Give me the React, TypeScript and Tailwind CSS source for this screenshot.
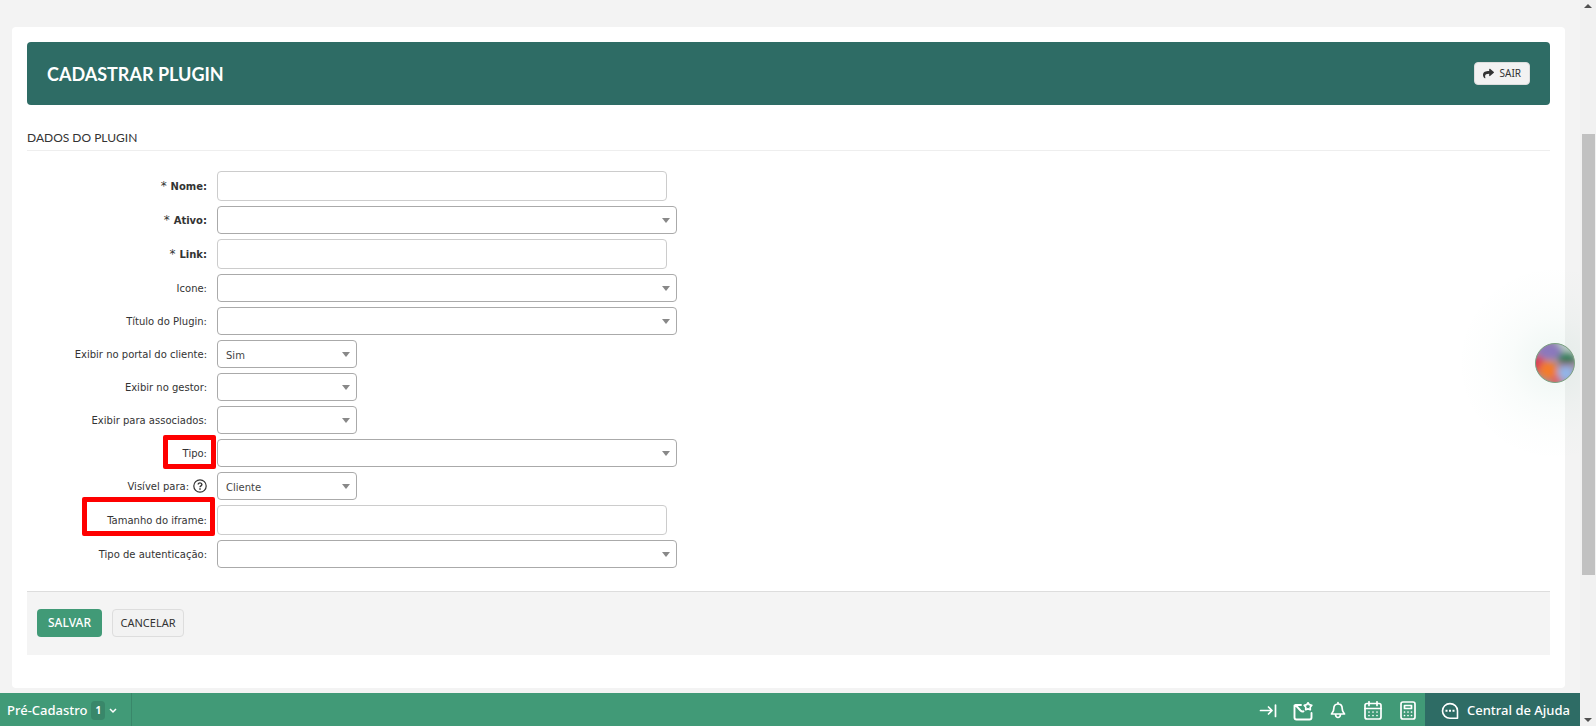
import type { ReactNode } from "react";
import { FaShare } from "react-icons/fa";
import clsx from "clsx";

type Field = {
  id: string;
  label: string;
  kind: "input" | "select" | "small";
  value?: string;
  required?: boolean;
  help?: boolean;
  mark?: "tipo" | "iframe";
};

const fields: Field[] = [
  { id: "nome", label: "Nome:", kind: "input", required: true },
  { id: "ativo", label: "Ativo:", kind: "select", required: true },
  { id: "link", label: "Link:", kind: "input", required: true },
  { id: "icone", label: "Icone:", kind: "select" },
  { id: "titulo", label: "Título do Plugin:", kind: "select" },
  { id: "portal", label: "Exibir no portal do cliente:", kind: "small", value: "Sim" },
  { id: "gestor", label: "Exibir no gestor:", kind: "small" },
  { id: "associados", label: "Exibir para associados:", kind: "small" },
  { id: "tipo", label: "Tipo:", kind: "select", mark: "tipo" },
  { id: "visivel", label: "Visível para:", kind: "small", value: "Cliente", help: true },
  { id: "iframe", label: "Tamanho do iframe:", kind: "input", mark: "iframe" },
  { id: "autenticacao", label: "Tipo de autenticação:", kind: "select" },
];

function HelpIcon() {
  return (
    <svg viewBox="0 0 14 14" className="ml-1 h-3.5 w-3.5 shrink-0" fill="none" stroke="#333" strokeWidth="1.2">
      <circle cx="7" cy="7" r="6.2" />
      <path d="M5.2 5.6c0-2.4 3.7-2.2 3.7 0 0 1.3-1.9 1.2-1.9 2.6" strokeWidth="1.4" />
      <path d="M7 9.3v1.4" strokeWidth="1.5" />
    </svg>
  );
}

function FieldRow({ field }: { field: Field }) {
  return (
    <div className="flex items-center">
      <div className="relative flex w-[180px] shrink-0 items-center justify-end">
        <label htmlFor={field.id} className={clsx("whitespace-nowrap", field.required && "font-bold")}>
          {field.required && <span className="text-xs leading-none font-normal">* </span>}
          {field.label}
        </label>
        {field.help && <HelpIcon />}
        {field.mark === "tipo" && (
          <div className="absolute -top-[11px] -right-[9px] h-[34px] w-[53px] rounded-xs border-5 border-[#fe0000]" />
        )}
        {field.mark === "iframe" && (
          <div className="absolute -top-4 -right-2 h-[39px] w-[133px] rounded-xs border-5 border-[#fe0000]" />
        )}
      </div>
      {field.kind === "input" ? (
        <input
          id={field.id}
          type="text"
          className="ml-2.5 h-[30px] w-[450px] rounded border border-[#ccc] bg-white px-2"
        />
      ) : (
        <div className={clsx("relative ml-2.5", field.kind === "small" ? "w-[140px]" : "w-[460px]")}>
          <select
            id={field.id}
            defaultValue={field.value ?? ""}
            className="block h-7 w-full appearance-none rounded border border-[#aaa] bg-white px-2 pt-0.5 text-[#444]"
          >
            <option>{field.value ?? ""}</option>
          </select>
          <svg viewBox="0 0 8 5" className="pointer-events-none absolute top-3 right-[7px] h-[5px] w-2" fill="#888">
            <path d="M0 0h8L4 5z" />
          </svg>
        </div>
      )}
    </div>
  );
}

function BarIcon({ children, label }: { children: ReactNode; label: string }) {
  return (
    <button type="button" aria-label={label} className="flex h-full w-[35px] items-center justify-center pt-0.5">
      <svg
        viewBox="0 0 20 20"
        className="h-5 w-5"
        fill="none"
        stroke="white"
        strokeWidth="1.7"
        strokeLinecap="round"
        strokeLinejoin="round"
      >
        {children}
      </svg>
    </button>
  );
}

function BottomBar() {
  return (
    <footer className="flex h-[33px] bg-[#419a77] font-['Noto_Sans',sans-serif] text-[13px] font-medium text-white">
      <button type="button" className="flex items-center border-r border-[#39876a] pt-0.5 pr-3.5 pl-[7px]">
        Pré-Cadastro
        <span className="ml-1 flex h-[19px] w-3.5 items-center justify-center rounded bg-[#39876a] text-[10px] font-bold">
          1
        </span>
        <svg viewBox="0 0 8 6" className="ml-1 h-1.5 w-2" fill="none" stroke="white" strokeWidth="1.5">
          <path d="M1 1l3 3 3-3" />
        </svg>
      </button>
      <div className="ml-auto flex">
        <BarIcon label="Recolher">
          <path d="M2.5 9.5h11.500M10.500 6l3.500 3.500-3.500 3.500M17.500 4v11.500" />
        </BarIcon>
        <BarIcon label="Mensagens">
          <path
            d="M8 4H2.500L7.500 9.500q1.500 1.500 3 .8M1.500 4.500V16.500a2 2 0 0 0 2 2h13a2 2 0 0 0 2-2V12"
            strokeWidth="1.9"
          />
          <path d="M15 1.800l1.300 1.900 2.500.6-1.600 1.900.1 2.500L15 7.900l-2.300.8.100-2.500-1.600-1.900 2.500-.6z" />
        </BarIcon>
        <BarIcon label="Notificações">
          <path d="M10 1.500v1.500M10 3c-3 0-4.200 2-4.200 4.500 0 3-1 3.500-2.300 5.500h13c-1.300-2-2.300-2.500-2.300-5.500C14.200 5 13 3 10 3zM7.500 13.500c.5 4 4.500 4 5 0" />
        </BarIcon>
        <BarIcon label="Agenda">
          <rect x="2" y="2.500" width="16" height="15.500" rx="2" />
          <path d="M2 7.500h16M6 .8v3.700M14 .8v3.700" />
          <path d="M6 11h.01M10 11h.01M14 11h.01M6 14.500h.01M10 14.500h.01M14 14.500h.01" />
        </BarIcon>
        <BarIcon label="Calculadora">
          <rect x="3" y="1" width="14" height="17" rx="2" />
          <path d="M6.500 4.500h7v3h-7z" />
          <path d="M6.500 11h.01M10 11h.01M13.500 11h.01M6.500 14.500h.01M10 14.500h.01M13.500 14.500h.01" />
        </BarIcon>
        <button type="button" className="flex w-[155px] items-center bg-[#2e6c65] pt-0.5 pl-4 whitespace-nowrap">
          <svg viewBox="0 0 18 18" className="mr-2 h-[18px] w-[18px]" fill="none" stroke="white" strokeWidth="1.6">
            <path d="M16.500 8.800A7.500 7.300 0 1 0 9 16.200h7.500z" strokeLinejoin="round" />
            <path d="M4.500 8.800h2M8 8.800h2M11.500 8.800h2" strokeWidth="2" />
          </svg>
          Central de Ajuda
        </button>
      </div>
    </footer>
  );
}

function Scrollbar() {
  return (
    <div className="flex w-4 shrink-0 flex-col items-center justify-between bg-[#f1f1f1]">
      <svg viewBox="0 0 8 4" className="mt-1 h-1 w-2" fill="#505050">
        <path d="M4 0l4 4H0z" />
      </svg>
      <div className="flex w-full flex-1 flex-col pr-px pl-0.5">
        <div className="flex-[126]" />
        <div className="flex-[441] bg-[#c1c1c1]" />
        <div className="flex-[143]" />
      </div>
      <svg viewBox="0 0 8 4" className="mb-1 h-1 w-2" fill="#505050">
        <path d="M0 0h8L4 4z" />
      </svg>
    </div>
  );
}

function AssistantOrb() {
  return (
    <div className="pointer-events-none absolute top-[263px] right-4 flex h-[200px] w-[125px] items-center justify-end bg-[radial-gradient(circle_at_100px_100px,rgba(65,154,119,0.09)_0,rgba(65,154,119,0.03)_45px,rgba(65,154,119,0.01)_70px,rgba(65,154,119,0)_98px)] pr-[5px]">
      <button type="button" aria-label="Assistente" className="pointer-events-auto h-10 w-10 rounded-full">
        <svg viewBox="0 0 40 40" className="h-10 w-10">
          <defs>
            <filter id="soft" x="-50%" y="-50%" width="200%" height="200%">
              <feGaussianBlur stdDeviation="3" />
            </filter>
            <clipPath id="ball">
              <circle cx="20" cy="20" r="19.5" />
            </clipPath>
          </defs>
          <g clipPath="url(#ball)">
            <rect width="40" height="40" fill="#a3909c" />
            <g filter="url(#soft)">
              <path d="M20-4h24v16H26z" fill="#b8cbc4" />
              <ellipse cx="15" cy="8" rx="12" ry="8" fill="#8b78bd" />
              <ellipse cx="32" cy="15" rx="9" ry="6" fill="#2b805c" />
              <circle cx="2" cy="21" r="8" fill="#d83e58" />
              <circle cx="21" cy="37" r="6" fill="#d96363" />
              <circle cx="13" cy="27" r="9" fill="#f47c2a" />
              <circle cx="31" cy="30" r="8" fill="#92b5e8" />
              <path d="M24 21h13" stroke="#a04f6c" strokeWidth="3" />
            </g>
          </g>
          <circle cx="20" cy="20" r="19.5" fill="none" stroke="#7ba282" strokeWidth="1" />
        </svg>
      </button>
    </div>
  );
}

export default function App() {
  return (
    <div className="relative flex min-h-screen bg-[#f3f3f3] font-['DejaVu_Sans',sans-serif] text-[10px] text-[#333]">
      <div className="flex min-w-0 flex-1 flex-col">
        <main className="mt-[27px] mr-[15px] mb-[5px] ml-3 flex-1 rounded bg-white p-[15px]">
          <header className="flex items-center justify-between rounded bg-[#2e6c65] p-5">
            <h1 className="pt-0.5 font-['Lato',sans-serif] text-lg leading-[21px] font-bold text-white">
              CADASTRAR PLUGIN
            </h1>
            <button
              type="button"
              className="flex h-[23px] items-center gap-1.5 rounded border border-[#ddd] bg-[#f2f2f2] px-2 font-['Noto_Sans',sans-serif]"
            >
              <FaShare className="h-[11px] w-[11px]" />
              SAIR
            </button>
          </header>

          <form>
            <h2 className="mt-[25px] border-b border-[#eee] pb-[5px] font-['Lato',sans-serif] text-xs leading-[15px]">
              DADOS DO PLUGIN
            </h2>
            <div className="mt-5 flex flex-col gap-[5px]">
              {fields.map((field) => (
                <FieldRow key={field.id} field={field} />
              ))}
            </div>
            <div className="mt-[23px] flex gap-2.5 border-t border-[#ddd] bg-[#f4f4f4] px-2.5 pt-[17px] pb-[18px] font-['Noto_Sans',sans-serif]">
              <button type="submit" className="h-7 w-[65px] rounded bg-[#419a77] text-xs font-medium text-white">
                SALVAR
              </button>
              <button type="button" className="h-7 w-[72px] rounded border border-[#ddd] bg-[#f2f2f2] text-[11px]">
                CANCELAR
              </button>
            </div>
          </form>
        </main>
        <BottomBar />
      </div>
      <Scrollbar />
      <AssistantOrb />
    </div>
  );
}
